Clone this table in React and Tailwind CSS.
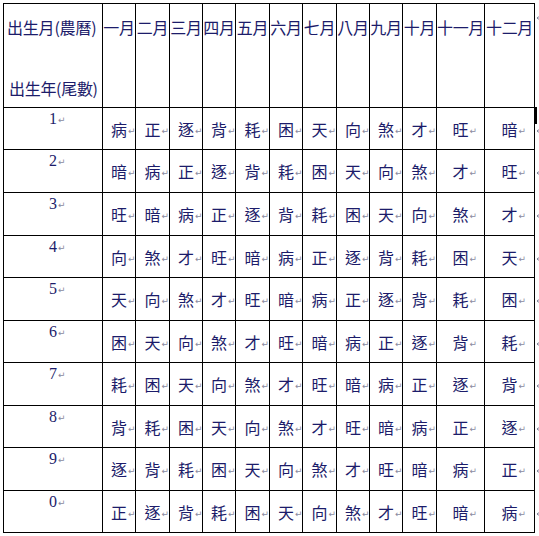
import React from 'react';

const months = ['一月', '二月', '三月', '四月', '五月', '六月', '七月', '八月', '九月', '十月', '十一月', '十二月'];

const rows = [
  ['1', '病正逐背耗困天向煞才旺暗'],
  ['2', '暗病正逐背耗困天向煞才旺'],
  ['3', '旺暗病正逐背耗困天向煞才'],
  ['4', '向煞才旺暗病正逐背耗困天'],
  ['5', '天向煞才旺暗病正逐背耗困'],
  ['6', '困天向煞才旺暗病正逐背耗'],
  ['7', '耗困天向煞才旺暗病正逐背'],
  ['8', '背耗困天向煞才旺暗病正逐'],
  ['9', '逐背耗困天向煞才旺暗病正'],
  ['0', '正逐背耗困天向煞才旺暗病'],
];

// row heights incl. the 1px line under each row
const markerHeights = ['h-[42px]', 'h-[43px]', 'h-[43px]', 'h-[42px]', 'h-[43px]', 'h-[42px]', 'h-[43px]', 'h-[42px]', 'h-[43px]', 'h-[42px]'];

const cjk = "font-['Noto_Sans_CJK_TC','Noto_Sans_CJK_SC',sans-serif]";

function Mark({ className = '' }) {
  return (
    <span className={`absolute left-full top-[4px] pl-px text-[9px] leading-none text-[#8a8aa0] font-['DejaVu_Sans',sans-serif] ${className}`}>
      ↵
    </span>
  );
}

// end-of-row mark, cut off by the window edge
function EdgeMark() {
  return (
    <svg width="6" height="7" viewBox="0 0 6 7" className="shrink-0">
      <path d="M5.5 0.5V4H1M2.5 2.5L1 4l1.5 1.5" fill="none" stroke="#8a8aa0" strokeWidth="1" />
    </svg>
  );
}

export default function App() {
  return (
    <div className={`relative w-[539px] h-[536px] bg-white overflow-hidden text-[#1c1c6a] ${cjk}`}>
      <div className="flex pl-[3px] pt-[3px]">
        <div className="grid gap-px bg-black p-px grid-cols-[98px_32px_33px_32px_32px_33px_32px_33px_32px_32px_33px_47px_49px] grid-rows-[103px_41px_42px_42px_41px_42px_41px_42px_41px_42px_41px]">
          <div className="bg-white flex flex-col text-[16px] leading-[20px] whitespace-nowrap">
            <div className="pt-[13px] pl-[3px] tracking-[-0.2px]">出生月(農曆)</div>
            <div className="mt-[41px] pl-[5px] tracking-[-0.3px]">出生年(尾數)</div>
          </div>
          {months.map((m) => (
            <div key={m} className="bg-white flex justify-center pt-[13px] text-[16px] leading-[20px] whitespace-nowrap tracking-[-0.3px]">
              {m}
            </div>
          ))}

          {rows.map(([n, chars]) => (
            <React.Fragment key={n}>
              <div className="bg-white flex justify-center pt-px">
                <span className="relative font-['Liberation_Serif',serif] text-[16px] leading-[20px]">
                  {n}
                  <Mark className="top-[7px]" />
                </span>
              </div>
              {chars.split('').map((c, i) => (
                <div key={i} className="bg-white flex items-center justify-center">
                  <span className="relative text-[16px] leading-[20px]">
                    {c}
                    <Mark className="top-[8px]" />
                  </span>
                </div>
              ))}
            </React.Fragment>
          ))}
        </div>

        {/* row-end marks right of the table */}
        <div className="flex flex-col w-[4px]">
          <div className="h-[104px] pt-[11px] pl-[1px]">
            <EdgeMark />
          </div>
          {markerHeights.map((h, i) => (
            <div key={i} className={`${h} flex items-center pl-[1px] relative`}>
              {i === 0 && <div className="absolute left-[-1px] top-0 w-[3px] h-[17px] bg-black" />}
              <div className="mt-[4px]">
                <EdgeMark />
              </div>
            </div>
          ))}
        </div>
      </div>
    </div>
  );
}
